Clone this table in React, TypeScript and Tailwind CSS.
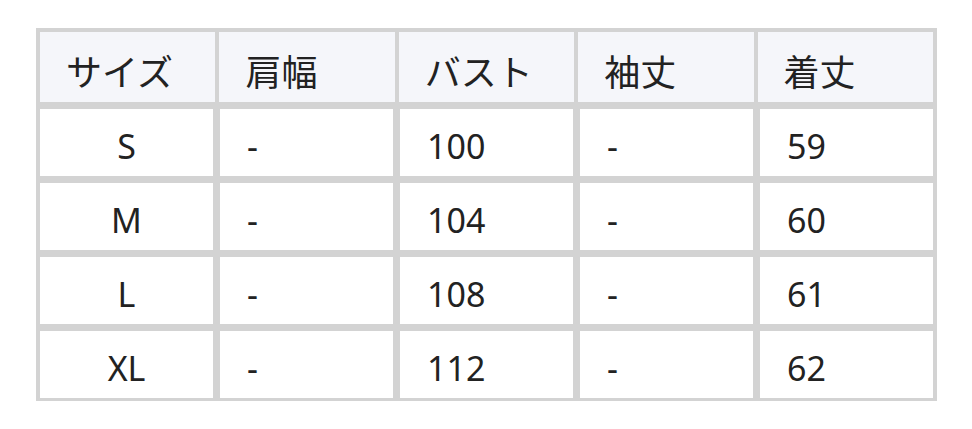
import React from "react";

const headers = ["サイズ", "肩幅", "バスト", "袖丈", "着丈"];

const rows = [
  ["S", "-", "100", "-", "59"],
  ["M", "-", "104", "-", "60"],
  ["L", "-", "108", "-", "61"],
  ["XL", "-", "112", "-", "62"],
];

const App = () => {
  return (
    <div
      className="min-h-screen bg-white text-[#222]"
      style={{ fontFamily: '"Noto Sans", "Noto Sans CJK JP", sans-serif' }}
    >
      <div className="ml-[36px] pt-[28px]">
        <div className="w-[901px] bg-[#d3d3d3] p-[4px] pb-[3px] flex flex-col gap-[7px]">
          {/* Header */}
          <div className="grid grid-cols-5 gap-x-[4px]">
            {headers.map((h) => (
              <div
                key={h}
                className="h-[70px] bg-[#f5f6fa] pl-[26px] pt-[14px] text-[36px] leading-[48px]"
                style={{ fontFamily: '"Noto Sans CJK JP", sans-serif' }}
              >
                {h}
              </div>
            ))}
          </div>

          {/* Body */}
          {rows.map((row) => (
            <div key={row[0]} className="grid grid-cols-5 gap-x-[7px]">
              {row.map((cell, i) => (
                <div
                  key={i}
                  className={
                    "h-[67px] bg-white pt-[13px] text-[34px] leading-[48px] " +
                    (i === 0 ? "text-center" : "pl-[27px]")
                  }
                >
                  {cell}
                </div>
              ))}
            </div>
          ))}
        </div>
      </div>
    </div>
  );
};

export default App;
